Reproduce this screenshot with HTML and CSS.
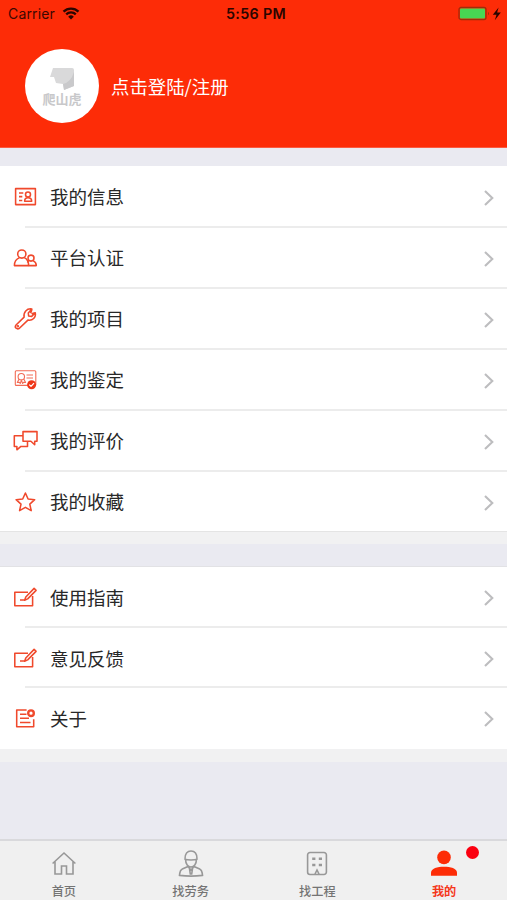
FILE: index.html
```html
<!DOCTYPE html>
<html lang="zh-CN">
<head>
<meta charset="utf-8">
<meta name="viewport" content="width=device-width, initial-scale=1">
<title>我的</title>
<link rel="stylesheet" href="styles.css">
</head>
<body>
<svg class="defs" aria-hidden="true">
  <symbol id="chevron" viewBox="0 0 12 18"><path d="M2 2l7.3 7L2 16"/></symbol>
  <symbol id="edit" viewBox="0 0 27 27"><path d="M16 8.3H2.8v13.4h17.8V12M8 16h5.2M12.6 16.2l1.2-3.2 8.3-8.6 2 2-8.4 8.5z"/></symbol>
</svg>
<div class="app">
  <header class="header">
    <div class="status">
      <div class="status-left"><span>Carrier</span>
        <svg class="wifi" viewBox="0 0 18 13"><path d="M1.5 4.6a10.7 10.7 0 0 1 15 0M4.2 7.4a6.9 6.9 0 0 1 9.6 0"/><path class="solid" d="M9 12.5L6.2 9.7a4 4 0 0 1 5.6 0z"/></svg>
      </div>
      <div class="clock">5:56 PM</div>
      <div class="status-right">
        <svg class="battery" viewBox="0 0 44 16"><rect class="case" x="1" y="1.5" width="27" height="12" rx="2"/><rect class="charge" x="2" y="2.5" width="25" height="10" rx="1"/><path class="tip" d="M30 5.7q2 1.8 0 3.6z"/><path d="M40.6 1.5L34.8 8.8h3.7l-1.7 5.4 6-7.6h-3.7z"/></svg>
      </div>
    </div>
    <div class="profile">
      <div class="avatar">
        <svg class="mark" viewBox="0 0 26 24"><path class="light" d="M4 1h19q2 0 2 2v16l-10 4-1-6-7-1-2-6H1z"/><path class="dark" d="M25 5v14l-10 4-1-6q8-2 11-12z"/></svg>
        <span class="brand">爬山虎</span>
      </div>
      <span class="login">点击登陆/注册</span>
    </div>
  </header>

  <main class="content">
    <section class="group">
      <a class="row"><svg class="icon" viewBox="0 0 27 27"><path d="M3.6 5.6h19.8v16H3.6zM7 10h4.3M7 13.6h3.3M7 17.4h3.3M12.6 18.3c0-2.8 1.6-3.6 3.4-3.6s3.7.8 3.7 3.6z"/><circle cx="16" cy="11.5" r="2.5"/></svg><span>我的信息</span><svg class="chevron"><use href="#chevron"/></svg></a>
      <a class="row"><svg class="icon" viewBox="0 0 27 27"><circle cx="9.8" cy="10" r="4.1"/><path d="M7.5 13.6C4 15 2.4 17.6 2.4 21.6h14.2c0-4-1.2-6.6-4.4-8"/><circle cx="19" cy="14.1" r="3"/><path d="M17 16.6c-.9.5-1.2 1.2-1.5 2M21 16.6c2.3 1 3.3 2.5 3.3 5h-7.7"/></svg><span>平台认证</span><svg class="chevron"><use href="#chevron"/></svg></a>
      <a class="row"><svg class="icon" viewBox="0 0 27 27"><path d="M3.8 20.3l8.3-8.2c-.9-4.8 2.7-9 7.7-8.2l-3.5 4 .3 3 3.1.5 3.6-3.6c.8 4.7-2.7 8.2-7.4 7.3L7.4 23.3c-2.4 1.6-5.1-.7-3.6-3zM20 4.3l-1.4 3.9M23 7.8l-3.4 1"/><circle cx="5.9" cy="21.2" r=".5"/></svg><span>我的项目</span><svg class="chevron"><use href="#chevron"/></svg></a>
      <a class="row"><svg class="icon fine" viewBox="0 0 27 27"><rect x="3.3" y="4.8" width="20.5" height="14.6" rx="1"/><circle cx="9.3" cy="10.7" r="3.2"/><path d="M7 13.3l-1.7 3.2 2-.3.9 1.3 1.2-3 1.3 3 .9-1.3 2 .3-1.7-3.2M14.5 9H21M14.5 12H21"/><circle class="fill" cx="19.6" cy="18.7" r="4.5"/><path class="check" d="M17.3 18.7l1.7 1.7 3-3.2"/></svg><span>我的鉴定</span><svg class="chevron"><use href="#chevron"/></svg></a>
      <a class="row"><svg class="icon" viewBox="0 0 27 27"><path d="M11 4.6h14v9.6h-2.3v3.5l-3.8-3.5H11zM11 8.7H2.3v10.7h2.6v3.4l4-3.4h6.6v-5.2"/></svg><span>我的评价</span><svg class="chevron"><use href="#chevron"/></svg></a>
      <a class="row"><svg class="icon" viewBox="0 0 27 27"><path d="M13.4 5l2.7 6 6.6.7-4.9 4.4 1.4 6.5-5.8-3.3-5.8 3.3L9 16.1l-4.9-4.4 6.6-.7z"/></svg><span>我的收藏</span><svg class="chevron"><use href="#chevron"/></svg></a>
    </section>
    <section class="group second">
      <a class="row"><svg class="icon"><use href="#edit"/></svg><span>使用指南</span><svg class="chevron"><use href="#chevron"/></svg></a>
      <a class="row"><svg class="icon"><use href="#edit"/></svg><span>意见反馈</span><svg class="chevron"><use href="#chevron"/></svg></a>
      <a class="row"><svg class="icon" viewBox="0 0 27 27"><path d="M14.6 5H4.7v16.7h17v-7.5M8 9.2h6.5M8 13.3h9M8 17.5h10.5"/><circle class="ring" cx="19" cy="8.2" r="2.8"/></svg><span>关于</span><svg class="chevron"><use href="#chevron"/></svg></a>
    </section>
  </main>

  <nav class="tabs">
    <a class="tab"><svg viewBox="0 0 28 28"><path d="M2.6 13.5L14 3l11.4 10.5M5 11.8V24h6.5v-8h5v8H23V11.8"/></svg><span>首页</span></a>
    <a class="tab"><svg viewBox="0 0 28 28"><path d="M8 8.8C8 4 10.3 1 14 1s6 3 6 7.8M7.4 9.3q6.6 1.5 13.2 0M8.6 9.8c0 4.2 2.4 7.2 5.4 7.2s5.4-3 5.4-7.2M11 16.5l-5.7 2.6C3.2 20 2.8 22 2.5 25.4q11.5 1.4 23 0c-.3-3.4-.7-5.4-2.8-6.3L17 16.5M11.3 17l2.7 3 2.7-3M12.5 18.7l.8 5.3h1.4l.8-5.3"/></svg><span>找劳务</span></a>
    <a class="tab"><svg viewBox="0 0 28 28"><path d="M11.5 24.5H7a2.4 2.4 0 0 1-2.4-2.4V4.9A2.4 2.4 0 0 1 7 2.5h14a2.4 2.4 0 0 1 2.4 2.4v17.2a2.4 2.4 0 0 1-2.4 2.4h-4.5zM12 24l2-4 2 4"/><path class="windows" d="M9.2 8.8h3.2M15.8 8.8H19M9.2 15h3.2M15.8 15H19"/></svg><span>找工程</span></a>
    <a class="tab active"><svg viewBox="0 0 28 28"><circle cx="14" cy="7.4" r="6.8"/><path d="M1 25.8v-3C1 18.2 7.5 16.7 14 16.7s13 1.5 13 6.1v3z"/></svg><span>我的</span><i class="badge"></i></a>
  </nav>
</div>
</body>
</html>
```
FILE: styles.css
```css
* { box-sizing: border-box; }
body {
  margin: 0;
  font-family: "Liberation Sans", "Noto Sans CJK SC", sans-serif;
  color: #282828;
}
.defs { position: absolute; width: 0; height: 0; }
svg { display: block; flex: none; }
.app {
  display: flex;
  flex-direction: column;
  height: 900px;
  background: #eaeaf1;
}
.header { height: 148px; background: #fd2c07; border-bottom: 1px solid #fb5a40; }
.status {
  display: grid;
  grid-template-columns: 1fr auto 1fr;
  align-items: center;
  height: 27px;
  padding: 0 5px 0 8px;
  font-family: Inter, sans-serif;
  font-size: 14px;
  color: #3c0802;
}
.status-left { display: flex; align-items: center; gap: 7px; letter-spacing: .15px; }
.wifi { width: 18px; height: 13px; margin-top: -1px; fill: none; stroke: #2a0500; stroke-width: 2.3; }
.wifi .solid { fill: #2a0500; stroke: none; }
.clock { margin-left: 2px; font-size: 14.3px; font-weight: 600; letter-spacing: .35px; color: #2a0500; }
.status-right { display: flex; justify-content: flex-end; }
.battery { width: 44px; height: 16px; fill: #2a0500; }
.battery .case { fill: none; stroke: #a02c0a; stroke-width: 1.3; }
.battery .charge { fill: #48d653; }
.battery .tip { fill: #a02c0a; }
.profile { display: flex; align-items: center; gap: 12px; height: 74px; margin: 22px 0 0 25px; }
.avatar {
  display: flex;
  flex-direction: column;
  align-items: center;
  width: 74px;
  height: 74px;
  padding-top: 18px;
  border-radius: 50%;
  background: #fff;
}
.mark { width: 26px; height: 24px; }
.mark .light { fill: #d9d9da; }
.mark .dark { fill: #c9c9cb; }
.brand { padding-top: 1px; font-size: 13px; line-height: 15px; font-weight: 700; color: #c8c8ca; }
.login { font-family: "Noto Sans CJK SC", sans-serif; font-size: 18.4px; line-height: 26px; color: #fff; }

.content { flex: 1; padding-top: 18px; }
.group { border-bottom: 12px solid #f1f1f2; background: #fff; }
.second { margin-top: 22px; border-top: 1px solid #e2e2e5; border-bottom-width: 13px; }
.row {
  position: relative;
  display: flex;
  align-items: center;
  height: 61px;
  padding: 0 12px;
  font-size: 18.5px;
}
.second .row { height: 60.7px; }
.row span { flex: 1; margin-left: 11px; padding-bottom: 1px; }
.row::after {
  content: "";
  position: absolute;
  left: 25px;
  right: 0;
  bottom: -1px;
  height: 2px;
  background: #ececec;
}
.second .row::after { bottom: 0; }
.row:last-child::after { left: 0; height: 1px; bottom: 0; background: #e4e4e4; }
.second .row:last-child::after { background: #fff; }
.icon { width: 27px; height: 27px; fill: none; stroke: #f0492c; stroke-width: 1.55; stroke-linejoin: round; }
.icon.fine { stroke-width: 1.1; stroke: #f26b55; }
.icon .fill { fill: #ef3618; stroke: none; }
.icon .check { stroke: #fff; stroke-width: 1.2; }
.icon .ring { stroke-width: 2.4; }
.chevron { width: 12px; height: 18px; margin-top: 2px; fill: none; stroke: #bdbdbf; stroke-width: 2.1; }
.second .chevron { margin-top: 1px; }

.tabs { display: flex; height: 61px; border-top: 2px solid #d9d9dc; background: #f0f0f0; }
.tab {
  position: relative;
  flex: 1;
  display: flex;
  flex-direction: column;
  align-items: center;
  padding: 9px 0 0 1px;
  font-size: 12.2px;
  font-weight: 500;
  line-height: 18px;
  color: #747474;
}
.tab svg { width: 28px; height: 28px; margin-bottom: 5px; fill: none; stroke: #989898; stroke-width: 1.6; }
.tab .windows { stroke-width: 2.6; }
.active { color: #f5371b; font-weight: 700; }
.tab.active svg { fill: #fd2c07; stroke: none; }
.badge { position: absolute; top: 5px; right: 28px; width: 13px; height: 13px; border-radius: 50%; background: #fb0010; }
```
